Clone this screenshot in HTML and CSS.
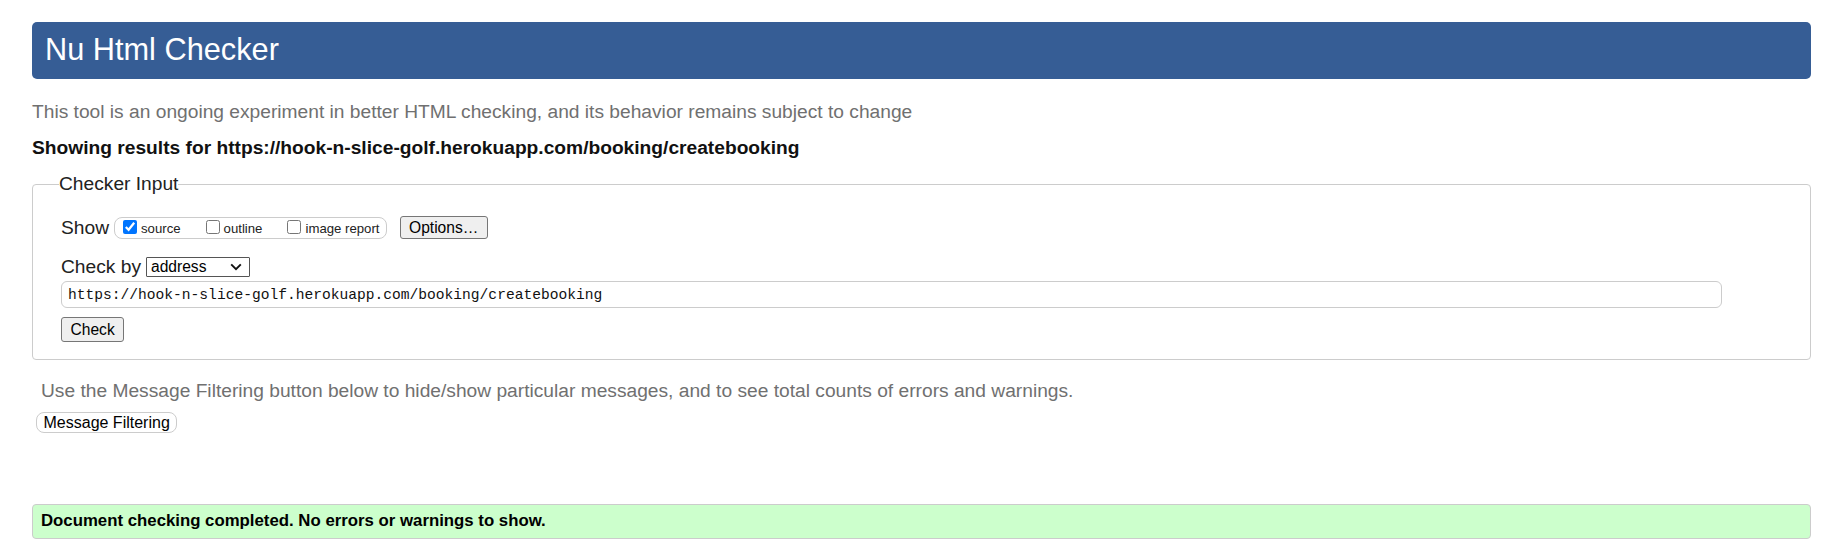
FILE: index.html
```html
<!DOCTYPE html>
<html lang="en">
<head>
<meta charset="utf-8">
<title>Nu Html Checker</title>
<link rel="stylesheet" href="styles.css">
</head>
<body>
<h1 class="title">Nu Html Checker</h1>
<p class="about">This tool is an ongoing experiment in better HTML checking, and its behavior remains subject to change</p>
<p class="results">Showing results for https://hook-n-slice-golf.herokuapp.com/booking/createbooking</p>
<form class="checker">
  <fieldset class="checker-input">
    <legend class="legend">Checker Input</legend>
    <div class="row row-show">
      <span class="label">Show</span>
      <span class="group">
        <label class="opt"><input type="checkbox" class="cb" checked><span>source</span></label>
        <label class="opt"><input type="checkbox" class="cb"><span>outline</span></label>
        <label class="opt"><input type="checkbox" class="cb"><span>image report</span></label>
      </span>
      <button type="button" class="btn btn-options">Options…</button>
    </div>
    <div class="row row-by">
      <span class="label">Check by</span>
      <span class="select-wrap">
        <select class="select"><option>address</option></select>
        <svg class="chevron" width="12" height="8" viewBox="0 0 12 8" aria-hidden="true"><path d="M1.2 1.4 L6 6.2 L10.8 1.4" fill="none" stroke="#111" stroke-width="1.9"/></svg>
      </span>
    </div>
    <input class="url" type="url" value="https://hook-n-slice-golf.herokuapp.com/booking/createbooking">
    <div class="row row-submit">
      <button type="button" class="btn btn-check">Check</button>
    </div>
  </fieldset>
</form>
<p class="filter-note">Use the Message Filtering button below to hide/show particular messages, and to see total counts of errors and warnings.</p>
<button type="button" class="btn-filter">Message Filtering</button>
<p class="success">Document checking completed. No errors or warnings to show.</p>
</body>
</html>
```

FILE: styles.css
```css
html {
  background: #ffffff;
}

body {
  margin: 0;
  padding: 22px 29px 0 32px;
  font-family: "Liberation Sans", Arial, sans-serif;
  font-size: 19.2px;
  line-height: 22px;
  color: #222222;
}

.title {
  margin: 0;
  padding: 10px 13px 12px;
  background: #365d95;
  color: #ffffff;
  font-weight: normal;
  font-size: 30.72px;
  line-height: 35px;
  border-radius: 5px;
}

.about {
  margin: 22px 0 0;
  color: #707070;
}

.results {
  margin: 14px 0 0;
  font-weight: bold;
  color: #111111;
}

.checker {
  margin: 14px 0 0;
}

.checker-input {
  margin: 0;
  min-width: 0;
  padding: 21px 28px 17px 28px;
  border: 1px solid #cccccc;
  border-radius: 4px;
}

.legend {
  padding: 0;
  margin-left: -2px;
  font-size: 19.2px;
  line-height: 22px;
  color: #222222;
}

.row {
  display: flex;
  align-items: center;
}

.row-show {
  height: 23px;
}

.row-by {
  margin-top: 17px;
  height: 22px;
}

.row-submit {
  margin-top: 9px;
}

.label {
  white-space: nowrap;
}

.group {
  display: inline-flex;
  align-items: center;
  box-sizing: border-box;
  height: 22px;
  margin-left: 5px;
  padding: 2px 6px 0 8px;
  border: 1px solid #cccccc;
  border-radius: 8px;
}

.opt {
  display: inline-flex;
  align-items: center;
  font-size: 13.2px;
  line-height: 15px;
  color: #222222;
  white-space: nowrap;
}

.opt + .opt {
  margin-left: 25px;
}

.cb {
  width: 14px;
  height: 14px;
  margin: 0 4px 3px 0;
}

.btn {
  box-sizing: border-box;
  margin: 0;
  padding: 0 8.5px;
  font-family: "Liberation Sans", Arial, sans-serif;
  font-size: 15.6px;
  color: #000000;
  background: #efefef;
  border: 1px solid #767676;
  border-radius: 3px;
}

.btn-options {
  height: 23px;
  margin-left: 13px;
}

.btn-check {
  height: 25px;
}

.select-wrap {
  position: relative;
  display: inline-block;
  height: 20px;
  margin-left: 5px;
}

.select {
  display: block;
  box-sizing: border-box;
  width: 104px;
  height: 20px;
  margin: 0;
  padding: 0 0 0 4px;
  font-family: "Liberation Sans", Arial, sans-serif;
  font-size: 15.6px;
  line-height: 18px;
  color: #000000;
  background: #ffffff;
  border: 1px solid #555555;
  border-radius: 1px;
  appearance: none;
  -webkit-appearance: none;
}

.chevron {
  position: absolute;
  left: 84px;
  top: 6px;
  pointer-events: none;
}

.url {
  display: block;
  box-sizing: border-box;
  width: calc(100% - 60px);
  height: 27px;
  margin: 3px 0 0;
  padding: 0 6px;
  font-family: "Liberation Mono", "DejaVu Sans Mono", monospace;
  font-size: 14.6px;
  color: #111111;
  background: #ffffff;
  border: 1px solid #cccccc;
  border-radius: 6px;
  outline: none;
}

.filter-note {
  margin: 20px 0 0;
  padding-left: 9px;
  color: #707070;
}

.btn-filter {
  display: block;
  box-sizing: border-box;
  height: 21px;
  margin: 10px 0 0 4px;
  padding: 0 6.5px;
  font-family: "Liberation Sans", Arial, sans-serif;
  font-size: 16px;
  line-height: 19px;
  color: #000000;
  background: #ffffff;
  border: 1px solid #cccccc;
  border-radius: 8px;
}

.success {
  margin: 71px 0 0;
  padding: 5.5px 8px 7px;
  font-size: 16.8px;
  line-height: 20px;
  font-weight: bold;
  color: #000000;
  background: #ccffcc;
  border: 1px solid #cccccc;
  border-radius: 4px;
}
```
